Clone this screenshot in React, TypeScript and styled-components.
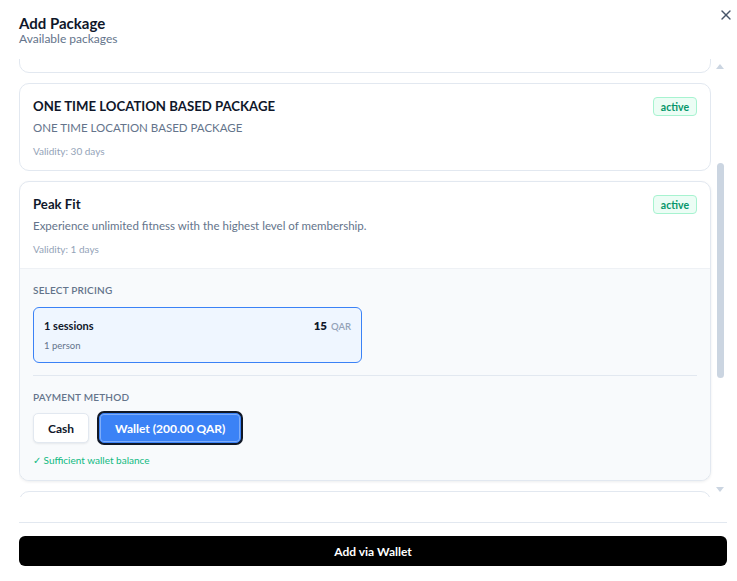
import React, { useCallback, useLayoutEffect, useRef, useState } from "react";
import styled, { createGlobalStyle } from "styled-components";

const GlobalStyle = createGlobalStyle`
  html, body {
    margin: 0;
    padding: 0;
    background: #ffffff;
    font-family: Lato, "Noto Sans", sans-serif;
    -webkit-font-smoothing: antialiased;
  }
  * { box-sizing: border-box; }
`;

const Dialog = styled.div`
  position: relative;
  height: 100vh;
  display: flex;
  flex-direction: column;
  padding: 14px 10px 15px 19px;
  background: #fff;
`;

const Header = styled.header`
  display: flex;
  flex-direction: column;
  margin-bottom: 13px;
`;

const Title = styled.h2`
  margin: 0;
  font-size: 15px;
  line-height: 18px;
  font-weight: 700;
  color: #0f172a;
`;

const Subtitle = styled.p`
  margin: 0;
  font-size: 12px;
  line-height: 14px;
  color: #64748b;
`;

const CloseButton = styled.button`
  position: absolute;
  top: 7px;
  right: 3px;
  width: 16px;
  height: 16px;
  padding: 0;
  border: none;
  background: transparent;
  color: #475569;
  display: flex;
  align-items: center;
  justify-content: center;
  cursor: pointer;
`;

/* Scroll region with a custom rail drawn over its right edge */
const ScrollFrame = styled.div`
  position: relative;
  flex: 1;
  min-height: 0;
  display: flex;
`;

const ScrollArea = styled.div`
  flex: 1;
  min-height: 0;
  overflow-y: auto;
  scrollbar-width: none;
  &::-webkit-scrollbar {
    display: none;
  }
`;

const Rail = styled.div`
  position: absolute;
  top: 0;
  right: 0;
  bottom: 0;
  width: 15px;
  pointer-events: none;
`;

const RailArrow = styled.div<{ $down?: boolean }>`
  position: absolute;
  left: 0;
  width: 15px;
  height: 15px;
  display: flex;
  align-items: center;
  justify-content: center;
  color: #cbd5e1;
  ${(p) => (p.$down ? "bottom: 0;" : "top: 0;")}
`;

const Thumb = styled.div`
  position: absolute;
  left: 5px;
  width: 7px;
  border-radius: 4px;
  background: #cbd5e1;
`;

const PackageList = styled.div`
  display: flex;
  flex-direction: column;
  gap: 10px;
  padding: 9px 16px 31px 0;
`;

const Card = styled.div<{ $selected?: boolean }>`
  border: 1px solid #e2e8f0;
  border-radius: 10px;
  background: #fff;
  overflow: hidden;
  box-shadow: ${(p) => (p.$selected ? "0 1px 3px rgba(15, 23, 42, 0.08)" : "none")};
`;

const CardBody = styled.div`
  padding: 14px 13px 13px;
`;

const TitleRow = styled.div`
  display: flex;
  justify-content: space-between;
  align-items: flex-start;
  height: 16px;
`;

const CardTitle = styled.h3`
  margin: 0;
  font-size: 13.2px;
  line-height: 16px;
  font-weight: 700;
  color: #0f172a;
`;

const Badge = styled.span`
  margin-top: -1px;
  height: 19px;
  padding: 0 7px;
  display: inline-flex;
  align-items: center;
  border: 1px solid #a7f3d0;
  border-radius: 4px;
  background: #ecfdf5;
  color: #059669;
  font-size: 10.5px;
  font-weight: 700;
`;

const Description = styled.p`
  margin: 6px 0 0;
  font-size: 11.5px;
  line-height: 16px;
  color: #64748b;
`;

const Validity = styled.p`
  margin: 9px 0 0;
  font-size: 10px;
  line-height: 12px;
  color: #94a3b8;
`;

const OptionsPanel = styled.div`
  border-top: 1px solid #eef1f5;
  background: #f8fafc;
  padding: 15px 13px 14px;
`;

const SectionLabel = styled.div`
  font-size: 10px;
  line-height: 12px;
  font-weight: 600;
  letter-spacing: 0.2px;
  text-transform: uppercase;
  color: #64748b;
`;

const PriceGrid = styled.div`
  margin-top: 11px;
  display: grid;
  grid-template-columns: 1fr 1fr;
  gap: 6px;
`;

const PriceOption = styled.div<{ $active?: boolean }>`
  border: 1px solid ${(p) => (p.$active ? "#3b82f6" : "#e2e8f0")};
  background: ${(p) => (p.$active ? "#eff6ff" : "#fff")};
  border-radius: 6px;
  padding: 10px 10px 10px;
`;

const PriceRow = styled.div`
  display: flex;
  justify-content: space-between;
  align-items: baseline;
`;

const Sessions = styled.span`
  font-size: 11px;
  line-height: 16px;
  font-weight: 700;
  color: #0f172a;
`;

const Amount = styled.span`
  font-size: 11.5px;
  line-height: 16px;
  font-weight: 800;
  color: #0f172a;
`;

const Currency = styled.span`
  margin-left: 4px;
  font-size: 9.5px;
  font-weight: 600;
  color: #94a3b8;
`;

const Persons = styled.div`
  margin-top: 5px;
  font-size: 9.5px;
  line-height: 12px;
  color: #64748b;
`;

const Divider = styled.hr`
  margin: 12px 0 0;
  border: none;
  border-top: 1px solid #e2e8f0;
`;

const PaymentSection = styled.div`
  padding-top: 15px;
`;

const MethodRow = styled.div`
  margin-top: 10px;
  display: flex;
  gap: 10px;
`;

const MethodButton = styled.button<{ $active?: boolean }>`
  height: 30px;
  padding: 0 ${(p) => (p.$active ? "15px" : "14px")};
  border-radius: 5px;
  font-family: inherit;
  font-size: 12px;
  font-weight: 700;
  cursor: pointer;
  border: 1px solid ${(p) => (p.$active ? "#3b82f6" : "#e2e8f0")};
  background: ${(p) => (p.$active ? "#3b82f6" : "#fff")};
  color: ${(p) => (p.$active ? "#fff" : "#0f172a")};
  box-shadow: ${(p) =>
    p.$active
      ? "inset 0 0 0 1px rgba(255,255,255,0.35), 0 0 0 2px #111827"
      : "0 1px 2px rgba(15, 23, 42, 0.08)"};
`;

const BalanceNote = styled.div`
  margin-top: 11px;
  font-size: 10px;
  line-height: 12px;
  color: #10b981;
`;

const Footer = styled.footer`
  margin-top: 25px;
  border-top: 1px solid #e2e8f0;
  padding-top: 13px;
`;

const SubmitButton = styled.button`
  width: 100%;
  height: 30px;
  border: none;
  border-radius: 6px;
  background: #000;
  color: #fff;
  font-family: inherit;
  font-size: 12px;
  font-weight: 700;
  cursor: pointer;
`;

type Pkg = {
  name: string;
  description: string;
  validity: number;
};

const packages: Pkg[] = [
  { name: "Monthly Unlimited", description: "Unlimited classes for a full month.", validity: 30 },
  { name: "Day Pass", description: "Single day access to all facilities.", validity: 1 },
  { name: "ONE TIME LOCATION BASED PACKAGE", description: "ONE TIME LOCATION BASED PACKAGE", validity: 30 },
];

const peakFit: Pkg = {
  name: "Peak Fit",
  description: "Experience unlimited fitness with the highest level of membership.",
  validity: 1,
};

const morePackages: Pkg[] = [
  { name: "Starter Pack", description: "Five sessions to get you going.", validity: 60 },
  { name: "Family Plan", description: "Access for up to four family members.", validity: 90 },
];

const PackageCard = ({ pkg, selected, children }: { pkg: Pkg; selected?: boolean; children?: React.ReactNode }) => (
  <Card $selected={selected}>
    <CardBody>
      <TitleRow>
        <CardTitle>{pkg.name}</CardTitle>
        <Badge>active</Badge>
      </TitleRow>
      <Description>{pkg.description}</Description>
      <Validity>Validity: {pkg.validity} days</Validity>
    </CardBody>
    {children}
  </Card>
);

const CloseIcon = () => (
  <svg width="16" height="16" viewBox="0 0 24 24" fill="none" stroke="currentColor" strokeWidth="2" strokeLinecap="round" strokeLinejoin="round">
    <path d="M18 6 6 18" />
    <path d="m6 6 12 12" />
  </svg>
);

const Triangle = ({ down }: { down?: boolean }) => (
  <svg width="8" height="5" viewBox="0 0 8 5" fill="currentColor">
    {down ? <path d="M0 0h8L4 5z" /> : <path d="M4 0l4 5H0z" />}
  </svg>
);

const BUTTON = 15;

export default function App() {
  const scrollRef = useRef<HTMLDivElement>(null);
  const [thumb, setThumb] = useState({ top: 0, height: 0 });

  const measure = useCallback(() => {
    const el = scrollRef.current;
    if (!el) return;
    const track = el.clientHeight - BUTTON * 2;
    const height = Math.max(20, (el.clientHeight / el.scrollHeight) * track);
    const top = BUTTON + (el.scrollTop / el.scrollHeight) * track;
    setThumb({ top, height });
  }, []);

  useLayoutEffect(() => {
    if (scrollRef.current) scrollRef.current.scrollTop = 181;
    measure();
  }, [measure]);

  return (
    <>
      <GlobalStyle />
      <Dialog>
        <Header>
          <Title>Add Package</Title>
          <Subtitle>Available packages</Subtitle>
        </Header>
        <CloseButton aria-label="Close">
          <CloseIcon />
        </CloseButton>

        <ScrollFrame>
          <ScrollArea ref={scrollRef} onScroll={measure}>
            <PackageList>
              {packages.map((p) => (
                <PackageCard key={p.name} pkg={p} />
              ))}
              <PackageCard pkg={peakFit} selected>
                <OptionsPanel>
                  <SectionLabel>Select Pricing</SectionLabel>
                  <PriceGrid>
                    <PriceOption $active>
                      <PriceRow>
                        <Sessions>1 sessions</Sessions>
                        <Amount>
                          15<Currency>QAR</Currency>
                        </Amount>
                      </PriceRow>
                      <Persons>1 person</Persons>
                    </PriceOption>
                  </PriceGrid>
                  <Divider />
                  <PaymentSection>
                    <SectionLabel>Payment Method</SectionLabel>
                    <MethodRow>
                      <MethodButton>Cash</MethodButton>
                      <MethodButton $active>Wallet (200.00 QAR)</MethodButton>
                    </MethodRow>
                    <BalanceNote>✓ Sufficient wallet balance</BalanceNote>
                  </PaymentSection>
                </OptionsPanel>
              </PackageCard>
              {morePackages.map((p) => (
                <PackageCard key={p.name} pkg={p} />
              ))}
            </PackageList>
          </ScrollArea>
          <Rail aria-hidden>
            <RailArrow>
              <Triangle />
            </RailArrow>
            <Thumb style={{ top: thumb.top, height: thumb.height }} />
            <RailArrow $down>
              <Triangle down />
            </RailArrow>
          </Rail>
        </ScrollFrame>

        <Footer>
          <SubmitButton>Add via Wallet</SubmitButton>
        </Footer>
      </Dialog>
    </>
  );
}
